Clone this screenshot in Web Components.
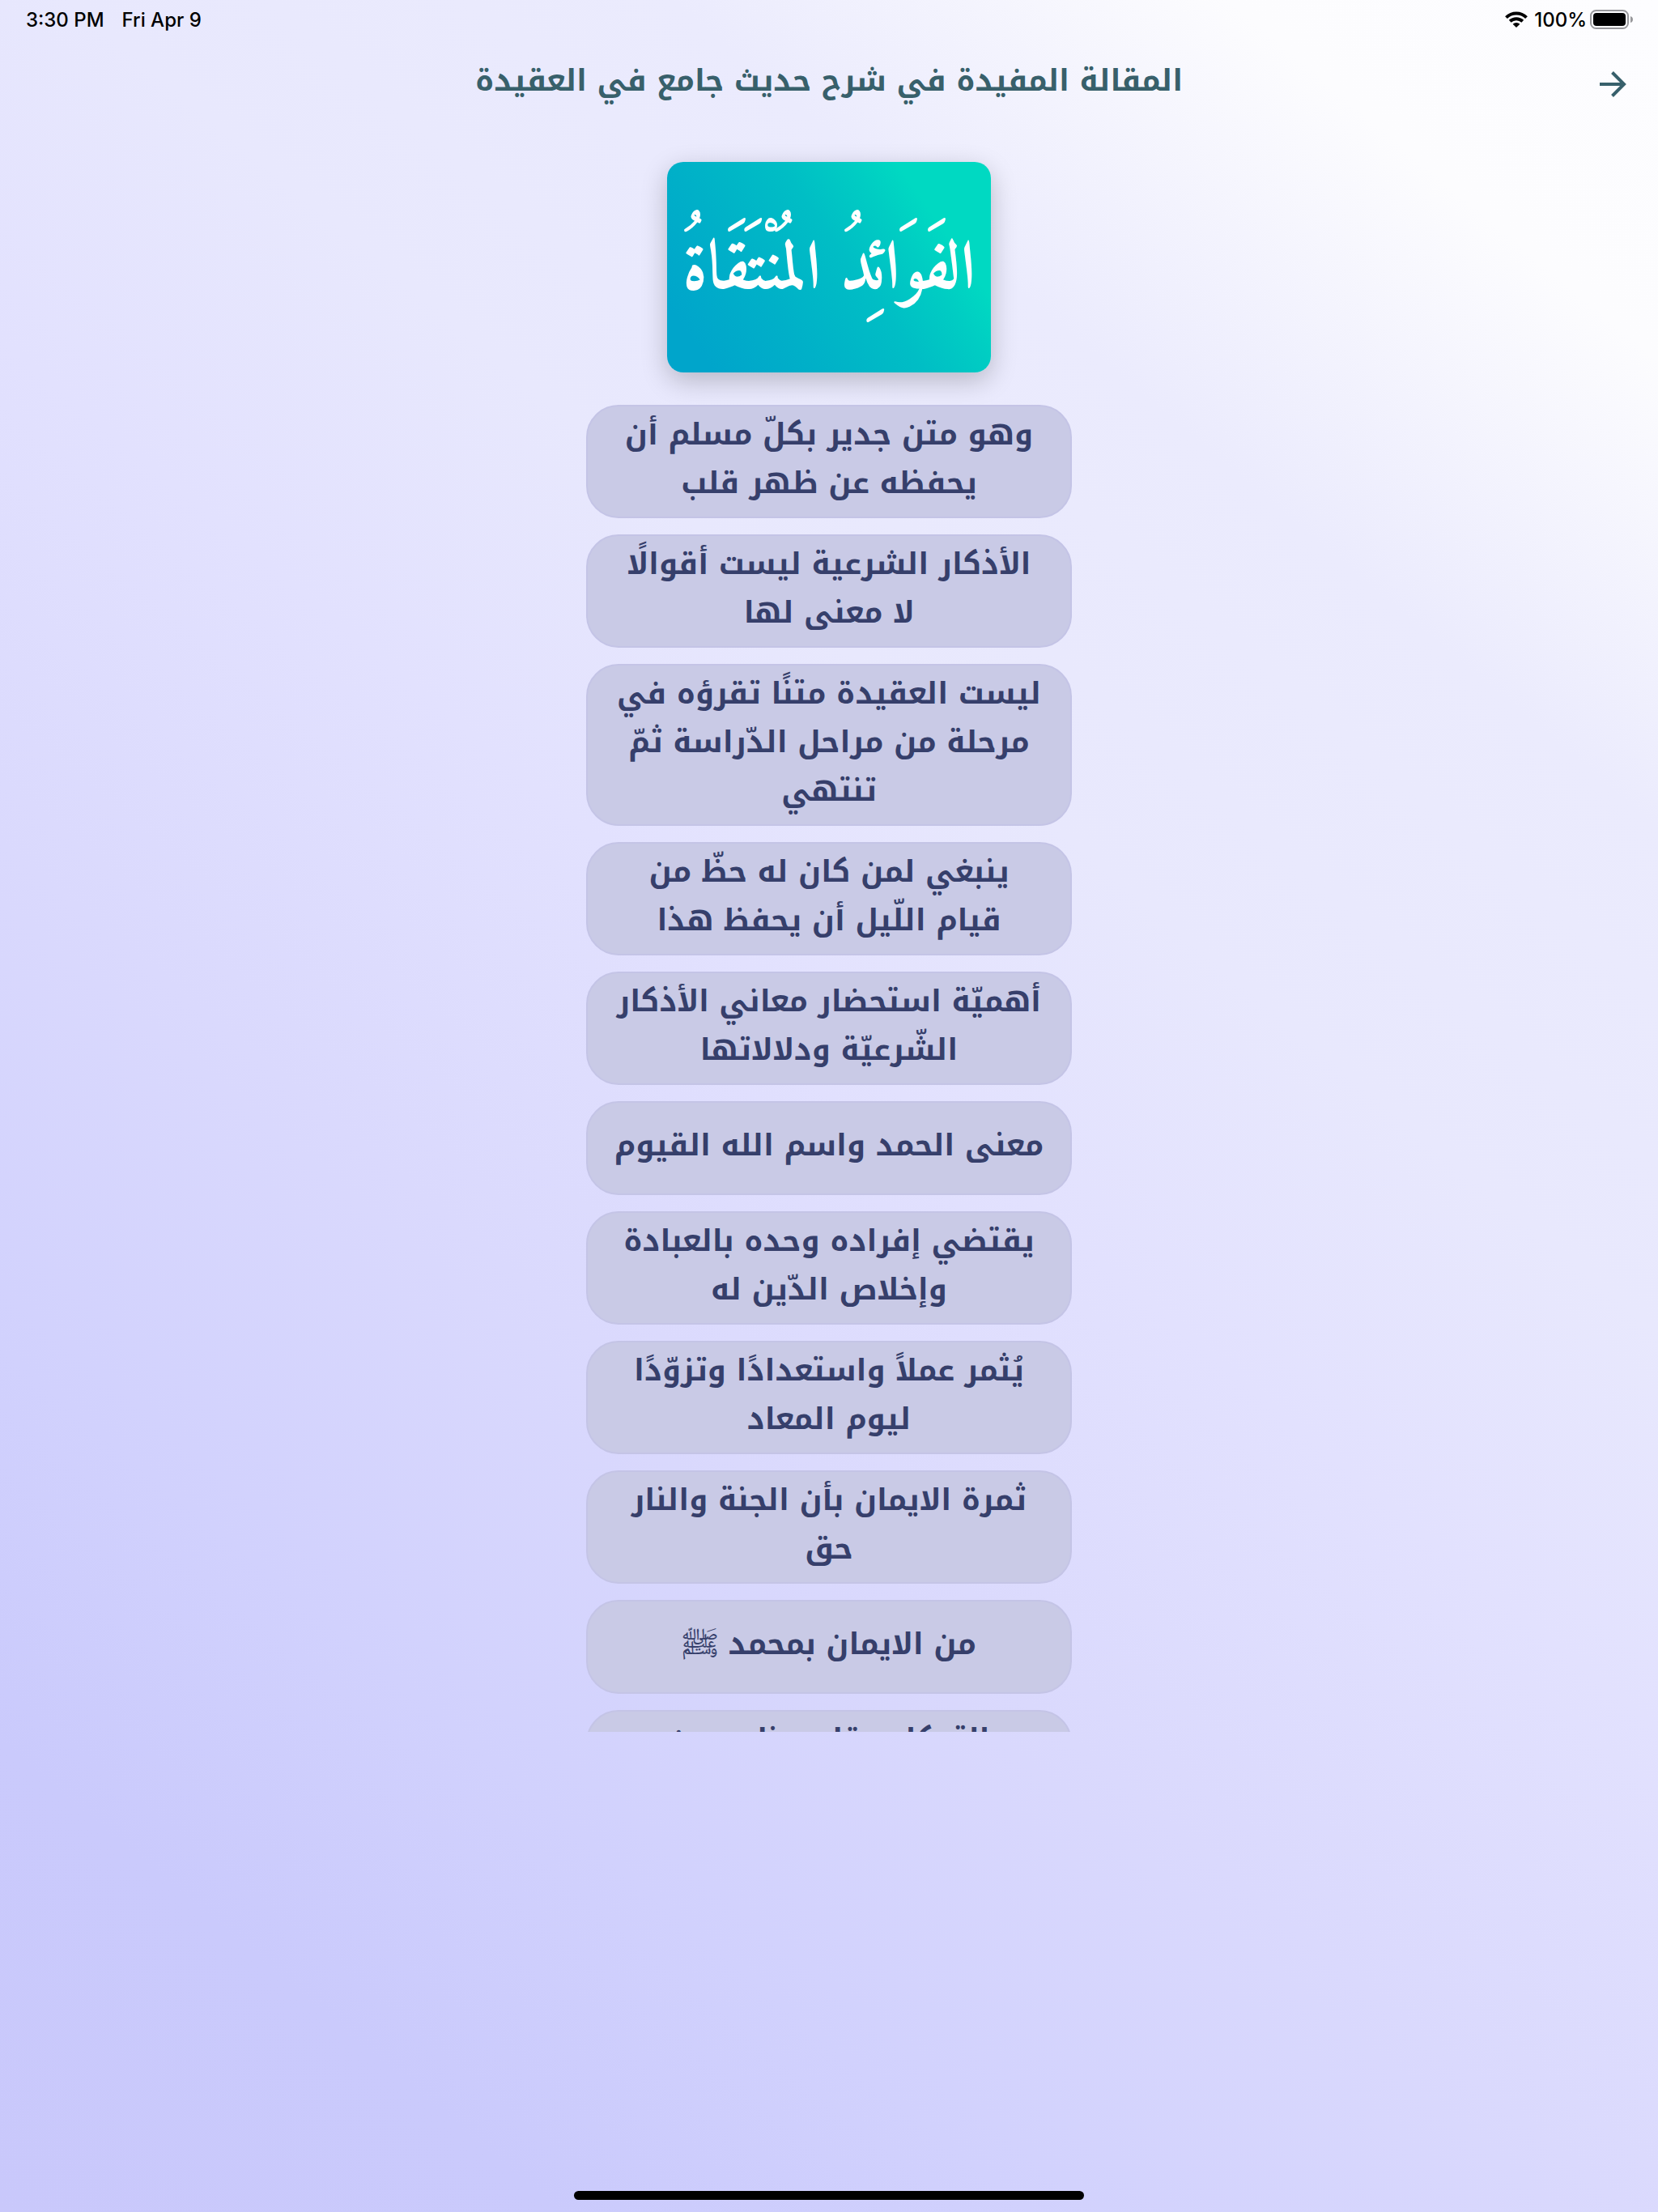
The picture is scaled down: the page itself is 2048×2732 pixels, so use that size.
<!DOCTYPE html>
<html lang="ar" dir="rtl">
<head>
<meta charset="utf-8">
<title>المقالة المفيدة في شرح حديث جامع في العقيدة</title>
<style>
html, body { margin: 0; }
body {
  font-family: "Noto Kufi Arabic", "DejaVu Sans Condensed", sans-serif;
  --ink: #363f6b;
  --title: #38606b;
}
</style>
</head>
<body>
<app-page>
  <status-bar slot="status"></status-bar>
  <page-header slot="header">المقالة المفيدة في شرح حديث جامع في العقيدة</page-header>
  <cover-card slot="cover">الفَوَائِدُ المُنْتَقَاةُ</cover-card>
  <lesson-list slot="list">
    <lesson-item>وهو متن جدير بكلّ مسلم أن<br>يحفظه عن ظهر قلب</lesson-item>
    <lesson-item>الأذكار الشرعية ليست أقوالًا<br>لا معنى لها</lesson-item>
    <lesson-item>ليست العقيدة متنًا تقرؤه في<br>مرحلة من مراحل الدّراسة ثمّ<br>تنتهي</lesson-item>
    <lesson-item>ينبغي لمن كان له حظّ من<br>قيام اللّيل أن يحفظ هذا</lesson-item>
    <lesson-item>أهميّة استحضار معاني الأذكار<br>الشّرعيّة ودلالاتها</lesson-item>
    <lesson-item>معنى الحمد واسم الله القيوم</lesson-item>
    <lesson-item>يقتضي إفراده وحده بالعبادة<br>وإخلاص الدّين له</lesson-item>
    <lesson-item>يُثمر عملاً واستعدادًا وتزوّدًا<br>ليوم المعاد</lesson-item>
    <lesson-item>ثمرة الايمان بأن الجنة والنار<br>حق</lesson-item>
    <lesson-item>من الايمان بمحمد ﷺ</lesson-item>
    <lesson-item>التوكل مقام عظيم من</lesson-item>
  </lesson-list>
</app-page>
<script>
function define(name, html) {
  const template = document.createElement('template');
  template.innerHTML = html;
  customElements.define(name, class extends HTMLElement {
    constructor() {
      super();
      this.attachShadow({ mode: 'open' }).append(template.content.cloneNode(true));
    }
  });
}

define('app-page', `
<style>
:host {
  display: flex; flex-direction: column; box-sizing: border-box; min-height: 100vh;
  background: linear-gradient(40deg, #c9c8fb 0%, #cacafc 13%, #d1d1fd 24%, #dad9fd 38%, #e2e1fe 52%, #e8e8fd 63%, #ebebfd 77%, #fcfcfe 90%, #fdfdff 100%);
}
main { display: flex; flex-direction: column; align-items: center; gap: 40px; padding-top: 44px; flex: 1; }
.home { align-self: center; width: 630px; height: 11px; border-radius: 6px; background: #000; margin-bottom: 15px; }
</style>
<slot name="status"></slot>
<slot name="header"></slot>
<main><slot name="cover"></slot><slot name="list"></slot></main>
<div class="home"></div>`);

define('status-bar', `
<style>
:host { display: flex; direction: ltr; align-items: center; justify-content: space-between; height: 48px; padding: 0 30px 0 32px; font: 500 24px Inter, sans-serif; color: #000; }
div { display: flex; align-items: center; }
.left { gap: 22px; }
.right { gap: 4px; }
.wifi { margin-right: 4px; }
svg { display: block; }
</style>
<div class="left"><span>3:30 PM</span><span>Fri Apr 9</span></div>
<div class="right">
  <svg class="wifi" width="28" height="20" viewBox="0 0 28 20" fill="none" stroke="#000" stroke-width="4">
    <path d="M1.5 7.6a18 18 0 0 1 25 0"/><path d="M6.2 12.3a11.3 11.3 0 0 1 15.6 0"/>
    <path d="M14 20l-4.4-4.3a6.4 6.4 0 0 1 8.8 0z" fill="#000" stroke="none"/>
  </svg>
  <span>100%</span>
  <svg width="54" height="24" viewBox="0 0 54 24">
    <rect x="1" y="1" width="46" height="22" rx="6.5" fill="none" stroke="#98989b" stroke-width="2"/>
    <rect x="4" y="4" width="40" height="16" rx="4" fill="#000"/>
    <path d="M50 8q3 1 3 4t-3 4z" fill="#98989b"/>
  </svg>
</div>`);

define('page-header', `
<style>
:host { display: grid; grid-template-columns: 1fr auto 1fr; align-items: center; height: 108px; padding: 0 36px; color: var(--title); }
h1 { grid-column: 2; margin: 0; font-size: 37px; font-weight: 700; line-height: 60px; padding-bottom: 4px; }
button { justify-self: start; border: 0; padding: 0; background: none; color: inherit; }
svg { display: block; }
</style>
<button aria-label="رجوع"><svg width="40" height="40" viewBox="0 0 40 40" fill="none" stroke="currentColor" stroke-width="4"><path d="M4 22H34M19.500 7.500L34 22 19.500 36.500"/></svg></button>
<h1><slot></slot></h1>`);

define('cover-card', `
<style>
:host {
  display: flex; align-items: center; justify-content: center; box-sizing: border-box; width: 400px; height: 260px; border-radius: 20px;
  background: linear-gradient(55deg, #00a5cb 10%, #00b0c8 32%, #00bec5 55%, #00cdc3 70%, #00d9c2 80%);
  box-shadow: 0 10px 32px rgba(0, 0, 0, .22);
  font: 700 84px/140px Amiri, "DejaVu Sans", serif; color: #fff; white-space: nowrap; padding-top: 12px;
}
</style>
<slot></slot>`);

define('lesson-list', `
<style>
:host { display: flex; flex-direction: column; gap: 20px; width: 100%; max-width: 600px; height: 60vh; overflow: hidden; }
</style>
<slot></slot>`);

define('lesson-item', `
<style>
:host { display: block; flex: none; }
:host(:last-child) button { min-height: 140px; align-items: start; }
button {
  display: flex; align-items: center; justify-content: center; box-sizing: border-box; width: 100%; min-height: 116px;
  padding: 5px 20px 11px; border: 2px solid #c4c4e6; border-radius: 40px; background: #c9cae6; color: var(--ink);
  font: 700 37px/60px "Noto Kufi Arabic", "DejaVu Sans Condensed", sans-serif; white-space: nowrap;
}
</style>
<button type="button"><span><slot></slot></span></button>`);
</script>
</body>
</html>
